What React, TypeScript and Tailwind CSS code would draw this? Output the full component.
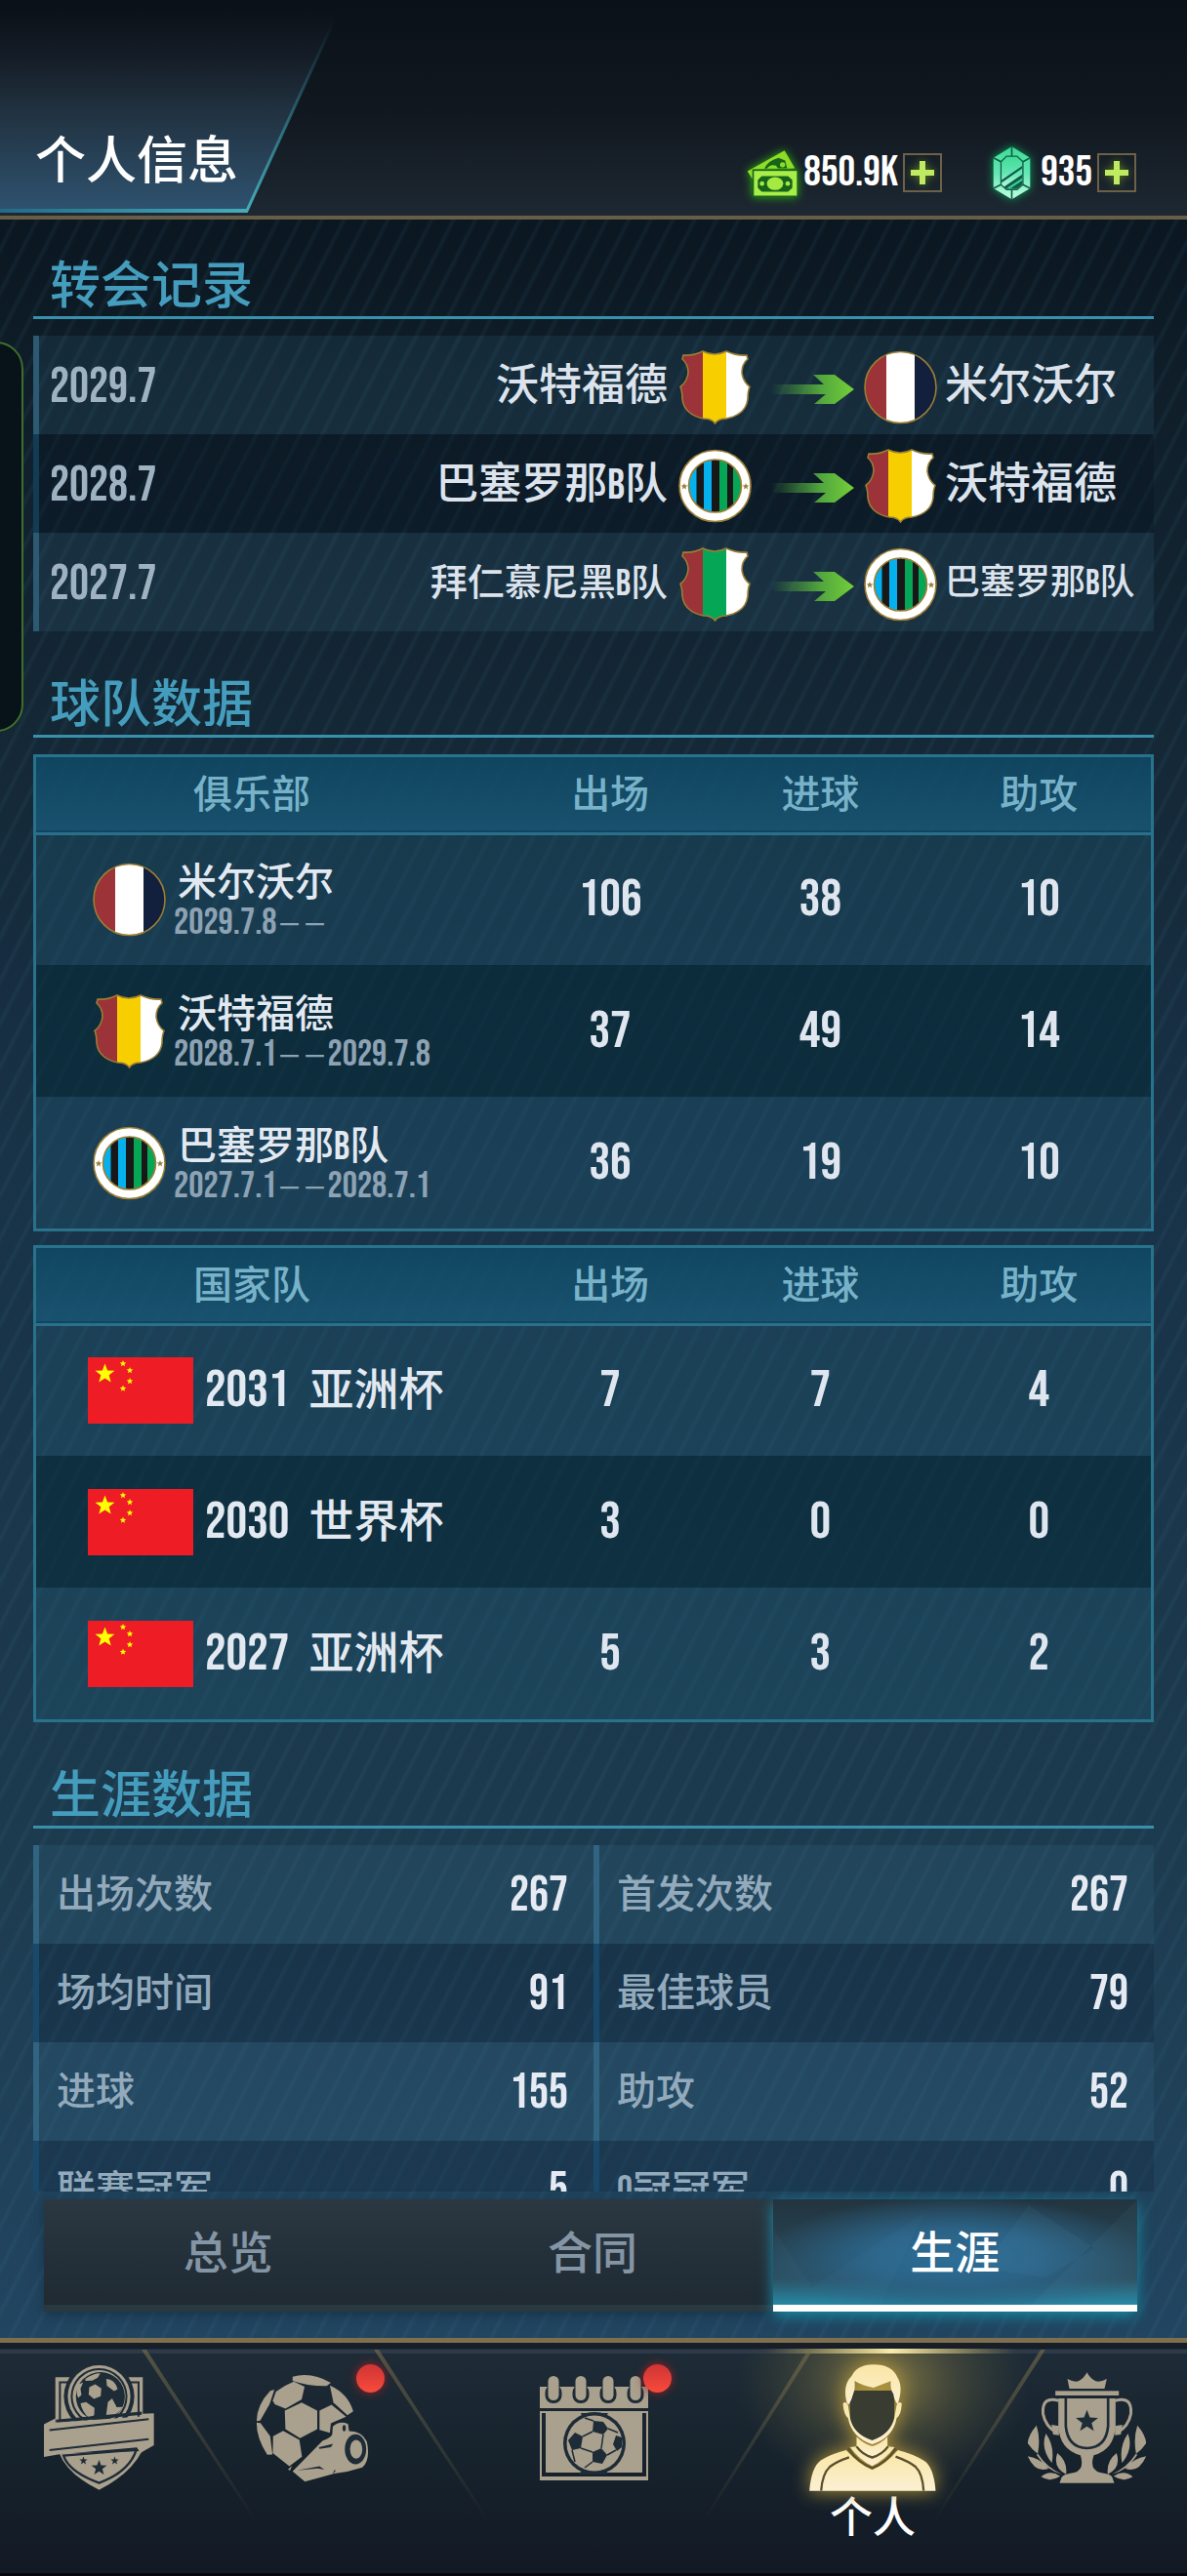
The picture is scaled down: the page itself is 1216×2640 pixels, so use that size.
import React, { useState } from 'react';
import clsx from 'clsx';

type CrestKind = 'yellow' | 'green' | 'tricolour' | 'stripes';

interface Transfer {
  date: string;
  from: string;
  fromCrest: CrestKind;
  to: string;
  toCrest: CrestKind;
}

const transfers: Transfer[] = [
  { date: '2029.7', from: '沃特福德', fromCrest: 'yellow', to: '米尔沃尔', toCrest: 'tricolour' },
  { date: '2028.7', from: '巴塞罗那B队', fromCrest: 'stripes', to: '沃特福德', toCrest: 'yellow' },
  { date: '2027.7', from: '拜仁慕尼黑B队', fromCrest: 'green', to: '巴塞罗那B队', toCrest: 'stripes' }
];

const clubs: { name: string; crest: CrestKind; start: string; end: string; stats: number[] }[] = [
  { name: '米尔沃尔', crest: 'tricolour', start: '2029.7.8', end: '', stats: [106, 38, 10] },
  { name: '沃特福德', crest: 'yellow', start: '2028.7.1', end: '2029.7.8', stats: [37, 49, 14] },
  { name: '巴塞罗那B队', crest: 'stripes', start: '2027.7.1', end: '2028.7.1', stats: [36, 19, 10] }
];

const cups = [
  { year: '2031', name: '亚洲杯', stats: [7, 7, 4] },
  { year: '2030', name: '世界杯', stats: [3, 0, 0] },
  { year: '2027', name: '亚洲杯', stats: [5, 3, 2] }
];

const career = [
  ['出场次数', 267],
  ['首发次数', 267],
  ['场均时间', 91],
  ['最佳球员', 79],
  ['进球', 155],
  ['助攻', 52],
  ['联赛冠军', 5],
  ['O冠冠军', 0]
];

const starPoints = (cx: number, cy: number, r: number) =>
  Array.from({ length: 10 }, (_, i) => {
    const a = (Math.PI / 5) * i - Math.PI / 2;
    const d = i % 2 ? r * 0.42 : r;
    return `${cx + d * Math.cos(a)},${cy + d * Math.sin(a)}`;
  }).join(' ');

const shieldPath =
  'M5 5 Q15 6 25 1 Q37 7 49 1 Q60 6 70 5 L71 9 Q65 14 65 23 Q66 32 73 37.5 Q71 42 71 50 Q69 66 49 70 Q41 70 37.5 75 Q34 70 26 70 Q6 66 4 50 Q4 42 2 37.5 Q9 32 10 23 Q10 14 4 9 Z';

const Crest: React.FC<{ kind: CrestKind }> = ({ kind }) => {
  const id = React.useId();

  if (kind === 'stripes') {
    return (
      <svg viewBox="0 0 75 76" className="h-[76px] w-[75px] shrink-0">
        <clipPath id={id}><circle cx="37.5" cy="38" r="27" /></clipPath>
        <circle cx="37.5" cy="38" r="36.5" fill="#fff" stroke="#9b7e35" strokeWidth="1.6" />
        <g clipPath={`url(#${id})`}>
          <rect x="10" y="10" width="9" height="56" fill="#05b0ee" />
          <rect x="18.5" y="10" width="8" height="56" fill="#181818" />
          <rect x="26" y="10" width="8" height="56" fill="#05b0ee" />
          <rect x="34" y="10" width="8" height="56" fill="#181818" />
          <rect x="42" y="10" width="8" height="56" fill="#06a657" />
          <rect x="50" y="10" width="7" height="56" fill="#181818" />
          <rect x="56" y="10" width="10" height="56" fill="#06a657" />
        </g>
        <circle cx="37.5" cy="38" r="27" fill="none" stroke="#9b7e35" strokeWidth="1.6" />
        <polygon points={starPoints(6, 38.5, 3.6)} fill="#9b7e35" />
        <polygon points={starPoints(69, 38.5, 3.6)} fill="#9b7e35" />
      </svg>
    );
  }

  const round = kind === 'tricolour';
  const middle = kind === 'yellow' ? '#f7cf00' : kind === 'green' ? '#06a657' : '#fff';
  return (
    <svg viewBox="0 0 75 76" className="h-[76px] w-[75px] shrink-0">
      <clipPath id={id}>
        {round ? <circle cx="37.5" cy="38" r="36.5" /> : <path d={shieldPath} />}
      </clipPath>
      <g clipPath={`url(#${id})`}>
        <rect width="26" height="76" fill="#9b3338" />
        <rect x={round ? 23 : 25} width={round ? 29 : 24} height="76" fill={middle} />
        <rect x={round ? 52 : 49} width="26" height="76" fill={round ? '#121f3d' : '#fff'} />
      </g>
      {round ? (
        <circle cx="37.5" cy="38" r="36.5" fill="none" stroke="#9b7e35" strokeWidth="1.6" />
      ) : (
        <path d={shieldPath} fill="none" stroke="#9b7e35" strokeWidth="1.6" />
      )}
    </svg>
  );
};

const Arrow = () => (
  <svg viewBox="0 0 88 32" className="mt-1 h-8 w-[88px] shrink-0">
    <defs>
      <linearGradient id="arrow-tail">
        <stop offset="0" stopColor="#4fa63c" stopOpacity="0" />
        <stop offset="0.6" stopColor="#52a63e" />
        <stop offset="1" stopColor="#74cf38" />
      </linearGradient>
    </defs>
    <path d="M2 11 H56 L45 1 H67 L87 16 L67 31 H46 L58 21 H2 Z" fill="url(#arrow-tail)" />
  </svg>
);

const Flag = () => (
  <svg viewBox="0 0 108 68" className="h-[68px] w-[108px] shrink-0">
    <rect width="108" height="68" fill="#ee1c25" />
    <g fill="#ffff00">
      <polygon points={starPoints(17.5, 17, 10.5)} />
      <polygon points={starPoints(36, 6.5, 3.5)} />
      <polygon points={starPoints(43, 13.5, 3.5)} />
      <polygon points={starPoints(43, 24.5, 3.5)} />
      <polygon points={starPoints(36, 32, 3.5)} />
    </g>
  </svg>
);

const MoneyIcon = () => (
  <svg viewBox="84 54 156 146" className="h-[49px] w-[52px] drop-shadow-[0_0_5px_#2fae10]">
    <path d="M86 121 L200 57 L232 112 L104 116 L102 146 Z" fill="#8fdc28" />
    <path d="M138 113 Q150 88 182 80 L202 88 L208 112 Z" fill="#17631a" />
    <path d="M146 113 Q156 98 174 104 L180 113 Z" fill="#8fdc28" />
    <circle cx="194" cy="101" r="8" fill="#8fdc28" />
    <rect x="101" y="115" width="140" height="85" fill="#17631a" />
    <rect x="106" y="120" width="132" height="76" fill="#a9ee48" />
    <path d="M130 136 H211 L224 148 V172 L211 184 H130 L118 172 V148 Z" fill="#17631a" />
    <ellipse cx="171" cy="159" rx="25" ry="20" fill="#a4ea42" />
    <circle cx="131" cy="159" r="7" fill="#a4ea42" />
    <circle cx="210" cy="159" r="7" fill="#a4ea42" />
  </svg>
);

const GemIcon = () => (
  <svg viewBox="838 60 116 164" className="h-[55px] w-[39px] drop-shadow-[0_0_5px_#0c9a58]">
    <defs>
      <linearGradient id="gem" x1="0" y1="0" x2="0" y2="1">
        <stop offset="0" stopColor="#3fdc94" />
        <stop offset="0.5" stopColor="#63e6b4" />
        <stop offset="1" stopColor="#c3ffe2" />
      </linearGradient>
    </defs>
    <path d="M896 61 L952 95 V188 L896 222 L840 188 V95 Z" fill="url(#gem)" />
    <path d="M863 107 L880 90 H912 L930 107 V177 L912 192 H880 L863 177 Z" fill="url(#gem)" stroke="#0f5f48" strokeWidth="4" />
    <path d="M865 163 L928 120 V127 L865 171 Z M872 184 L928 146 V176 L911 190 H881 Z" fill="#0d5a48" />
    <path d="M882 187 L928 157 V164 L890 190 Z" fill="#3ccf92" />
    <path d="M896 61 V90 M840 95 L863 107 M952 95 L930 107 M840 188 L863 177 M952 188 L930 177 M896 222 V192" stroke="#0f5f48" strokeWidth="5" />
  </svg>
);

const PlusButton: React.FC<{ label: string }> = ({ label }) => (
  <button aria-label={label} className="ml-[5px] flex h-10 w-10 items-center justify-center border-2 border-[#6d6147]">
    <svg viewBox="0 0 24 24" className="h-6 w-6 drop-shadow-[0_0_4px_#5d7d1c]">
      <path d="M9 0 H15 V9 H24 V15 H15 V24 H9 V15 H0 V9 H9 Z" fill="#c0ea62" />
    </svg>
  </button>
);

const Cut = '#1e2c37';

const BadgeIcon = () => (
  <svg viewBox="135 105 338 383" className="h-[128px] w-[113px]" fill="#a9a08e">
    <path d="M170 142 H438 V290 H170 Z" />
    <path d="M184 286 V157 H425 V286" fill="none" stroke={Cut} strokeWidth="6" />
    <circle cx="304" cy="201" r="108" fill={Cut} />
    <circle cx="304" cy="201" r="96" />
    <circle cx="304" cy="201" r="87" fill={Cut} />
    <circle cx="304" cy="201" r="81" />
    <circle cx="308" cy="201" r="75" fill={Cut} />
    <path d="M274 172 L292 163 L311 176 L309 200 L288 208 L272 195 Z M262 147 Q285 130 308 130 L300 143 L283 152 L262 153 Z M326 147 Q352 148 361 178 L350 184 L328 168 Z M240 163 L255 158 L247 177 L250 196 L240 205 Q230 185 240 163 Z M331 218 L344 207 L358 234 L377 233 Q360 262 325 264 Z M247 222 L264 218 L290 236 L289 258 L272 266 Q252 248 247 222 Z" />
    <path d="M172 277 L435 252" stroke={Cut} strokeWidth="10" />
    <path d="M182 375 Q208 440 304 487 Q398 440 436 368 Z" />
    <path d="M195 382 L418 364 Q398 430 304 466 Q212 432 195 382 Z" fill="none" stroke={Cut} strokeWidth="7" />
    <path d="M135 286 L170 268 V281 L435 262 V254 L472 252 V350 L430 374 L420 357 L182 378 L135 386 Z" />
    <path d="M152 304 L456 270 M152 365 L456 332" stroke={Cut} strokeWidth="6" />
    <g fill={Cut}>
      <polygon points={starPoints(304, 420, 25)} />
      <polygon points={starPoints(256, 398, 13)} />
      <polygon points={starPoints(352, 398, 13)} />
    </g>
  </svg>
);

const WhistleIcon = () => (
  <svg viewBox="794 130 348 334" className="h-[111px] w-[116px]" fill="#a9a08e">
    <path d="M907 138 Q965 122 1025 157 L1012 167 Q955 168 907 151 Z" />
    <path d="M911 153 L944 169 L935 208 L885 237 L852 223 L846 212 L856 184 Q880 165 911 153 Z" />
    <path d="M851 178 L838 182 Q797 225 796 275 L807 274 L836 223 Z" />
    <path d="M935 218 L983 243 V300 L930 328 L885 300 L883 243 Z" />
    <path d="M1022 165 Q1078 190 1094 245 L1076 257 L1033 218 Z" />
    <path d="M990 243 L1027 225 L1072 262 L1025 282 L1022 311 L990 302 Z" />
    <path d="M796 280 L808 281 L838 322 L845 378 L829 379 Q796 330 796 280 Z" />
    <path d="M847 322 L878 305 L928 333 L936 385 L897 414 L846 374 Z" />
    <path d="M907 430 L1000 335 Q1022 328 1029 317 L1031 292 Q1052 272 1078 284 L1081 306 Q1120 305 1136 338 Q1148 395 1122 418 Q1080 432 1036 437 L945 462 Z" />
    <path d="M893 424 L905 413 L899 428 Z" />
    <g fill={Cut}>
      <ellipse cx="1101" cy="362" rx="33" ry="46" />
      <ellipse cx="1066" cy="297" rx="5" ry="10" />
      <path d="M988 356 L1032 345 L1025 356 L990 361 Z M921 427 L990 414 L1005 425 L985 421 Z M1030 440 L1036 426 L1040 428 Z" />
    </g>
    <ellipse cx="1103" cy="362" rx="19" ry="29" />
  </svg>
);

const CalendarIcon = () => (
  <svg viewBox="0 0 111 107" className="h-[107px] w-[111px]" fill="#a9a08e">
    <path d="M0 11 H111 V33 H0 Z" />
    <path d="M1 37 H110 V106 H1 Z" fill="none" stroke="#a9a08e" strokeWidth="2" />
    <rect x="1" y="103" width="109" height="4" />
    <rect x="6" y="38" width="99" height="61" />
    {[14, 42, 70, 98].map((x) => (
      <g key={x}>
        <rect x={x - 8.5} y="9" width="17" height="19" rx="8" fill={Cut} />
        <rect x={x - 5.5} y="0" width="11" height="25" rx="5.5" />
      </g>
    ))}
    <path d="M42 38 H70 L64 48 H46 Z M40 101 L46 92 H66 L70 101 Z" fill={Cut} />
    <circle cx="56" cy="69" r="32" fill={Cut} />
    <circle cx="56" cy="69" r="28.5" />
    <g fill={Cut}>
      <path d="M55 46 L65 47 L70 54 L65 60 L54 57 Z" />
      <path d="M36 58 L44 62 L42 74 L33 76 L29 66 Z" />
      <path d="M54 78 L63 74 L69 81 L64 90 L54 88 Z" />
      <path d="M78 61 L84 63 L84 73 L79 77 L75 70 Z" />
    </g>
    <path d="M54 57 L44 62 M55 46 L46 43 M70 54 L80 58 M65 60 L63 74 M42 74 L54 78 M69 81 L78 76 M54 88 L46 94 M33 76 L36 88" stroke={Cut} strokeWidth="1.5" fill="none" />
  </svg>
);

const PersonIcon = () => (
  <svg viewBox="92 69 389 390" className="h-[130px] w-[130px] drop-shadow-[0_0_10px_#b89a3c]">
    <defs>
      <linearGradient id="person" x1="0" y1="0" x2="0" y2="1">
        <stop offset="0" stopColor="#fae6a4" />
        <stop offset="1" stopColor="#fbf0d3" />
      </linearGradient>
    </defs>
    <path d="M216 150 H354 L352 250 Q335 290 285 306 Q232 290 218 250 Z" fill="#393c31" />
    <g fill="url(#person)">
      <path d="M208 190 Q192 135 222 105 Q240 69 290 70 Q345 70 362 108 Q382 140 363 192 Q352 180 350 160 Q340 148 342 121 Q318 130 289 141 Q255 135 231 120 Q233 145 228 156 Q222 178 214 192 Z" />
      <path d="M195 190 Q204 180 211 195 L217 235 Q228 285 285 303 Q340 285 353 235 L360 195 Q366 180 376 190 Q374 225 360 235 Q350 295 285 315 Q222 295 211 235 Q198 225 195 190 Z" />
      <path d="M237 292 Q260 315 285 321 Q310 315 332 292 V320 L312 342 Q285 362 258 342 L237 320 Z" />
      <path d="M217 324 L236 322 Q255 350 285 360 Q315 350 335 322 L354 324 Q325 362 285 382 Q245 362 217 324 Z" />
      <path d="M92 458 Q98 385 128 364 Q158 345 205 333 Q245 378 285 394 Q325 378 364 333 Q412 345 445 366 Q474 385 480 458 Z" />
    </g>
    <path d="M128 458 Q132 405 155 384 Q175 368 214 355 M443 458 Q440 405 418 384 Q398 368 357 353 M237 322 Q255 347 285 355 Q315 347 334 322 M211 328 Q240 370 285 388 Q330 370 358 328" fill="none" stroke="#5a4f2c" strokeWidth="7" />
  </svg>
);

const laurel =
  'M789 260 Q763 290 762 315 Q775 335 793 347 Q802 300 789 260 Z M818 285 Q800 330 836 376 Q846 325 818 285 Z M853 345 Q838 390 880 410 Q885 370 853 345 Z M762 355 Q800 360 826 393 Q785 408 762 355 Z M803 418 Q830 395 862 416 Q830 436 803 418 Z M792 345 Q820 390 868 410 Q820 400 790 352 Z';
const handle = 'M858 184 Q805 168 809 224 Q816 262 850 282';

const TrophyIcon = () => (
  <svg viewBox="760 96 368 342" className="h-[114px] w-[123px]" fill="#a9a08e">
    <path d="M890 147 L884 117 Q905 128 918 124 Q935 115 944 97 Q953 115 971 124 Q985 128 1005 117 L998 147 Z" />
    <rect x="847" y="154" width="195" height="14" />
    <path d="M856 177 H1032 V262 Q1028 335 965 352 Q950 395 985 405 Q1020 410 1022 420 L1028 437 H860 L866 420 Q870 410 905 405 Q938 395 924 352 Q860 335 856 262 Z" />
    <path d="M879 177 V262 Q885 328 944 330 Q1003 328 1009 262 V177" fill="none" stroke={Cut} strokeWidth="8" />
    <path d="M835 258 L858 262 V290 L840 288 Z M1053 258 L1030 262 V290 L1048 288 Z" />
    <path d={handle} fill="none" stroke="#a9a08e" strokeWidth="9" />
    <path d={laurel} />
    <g transform="translate(1888 0) scale(-1 1)">
      <path d={handle} fill="none" stroke="#a9a08e" strokeWidth="9" />
      <path d={laurel} />
    </g>
    <polygon points={starPoints(944, 248, 36)} fill={Cut} />
  </svg>
);

const SectionTitle: React.FC<{ children: React.ReactNode }> = ({ children }) => (
  <h2 className="mb-[17px] border-b-[3px] border-[#3990ac] pt-3 pl-[17px] text-[52px] leading-[56px] text-[#459dbd]">
    {children}
  </h2>
);

const StatsTable: React.FC<{ title: string; rows: { key: string; label: React.ReactNode; stats: number[] }[] }> = ({ title, rows }) => (
  <div className="border-[3px] border-[#28728c]">
    <table className="w-full table-fixed border-collapse">
      <thead>
        <tr className="h-[78px] border-b-[3px] border-[#2a6f8b] bg-linear-to-b from-[#0f4864]/90 to-[#195573]/90 text-[40px] leading-[56px] text-[#78b2c9]">
          <th scope="col" className="w-[42.2%] pt-1 pr-10 font-medium">{title}</th>
          <th scope="col" className="w-[18.6%] pt-1 font-medium">出场</th>
          <th scope="col" className="w-[19.1%] pt-1 font-medium">进球</th>
          <th scope="col" className="pt-1 font-medium">助攻</th>
        </tr>
      </thead>
      <tbody>
        {rows.map((row) => (
          <tr key={row.key} className="h-[135px] odd:bg-[#1f5a73]/35 even:bg-[#062b39]/60">
            <td>{row.label}</td>
            {row.stats.map((value, i) => (
              <td key={i} className="text-center text-[54px] leading-[60px] text-[#dfe6ef]">
                {value}
              </td>
            ))}
          </tr>
        ))}
      </tbody>
    </table>
  </div>
);

export default function App() {
  const [tab, setTab] = useState('生涯');

  const clubRows = clubs.map((club) => ({
    key: club.name,
    stats: club.stats,
    label: (
      <div className="flex items-center gap-2 pl-[58px]">
        <Crest kind={club.crest} />
        <div className="pt-2 whitespace-nowrap">
          <div className="pl-1 text-[40px] leading-[44px] text-[#e3e9f1]">{club.name}</div>
          <div className="text-[38px] leading-9 text-[#8da2b3]">
            {club.start}
            <span className="text-[26px]">－－</span>
            {club.end}
          </div>
        </div>
      </div>
    )
  }));

  const cupRows = cups.map((cup) => ({
    key: cup.year,
    stats: cup.stats,
    label: (
      <div className="flex items-center gap-3 pl-[53px] whitespace-nowrap text-[#e3e9f1]">
        <Flag />
        <span className="flex items-center gap-5">
          <span className="text-[54px] leading-[60px]">{cup.year}</span>
          <span className="pt-1 text-[46px] leading-[60px]">{cup.name}</span>
        </span>
      </div>
    )
  }));

  return (
    <div className="relative flex h-screen min-h-[1200px] flex-col overflow-hidden bg-[repeating-linear-gradient(117deg,transparent_0px,transparent_13px,rgba(80,150,180,0.09)_16px,transparent_20px),linear-gradient(180deg,#0a1620_8%,#0f1e29_15%,#142735_28%,#183247_45%,#1c3a4d_70%,#224560_91%)] font-[Bebas_Neue,Oswald,Roboto_Condensed,Noto_Sans_CJK_SC,sans-serif] font-medium">
      <header className="relative flex shrink-0 items-end justify-between border-b-4 border-[#685d47] bg-linear-to-b from-[#0b1119] via-[#11171f] to-[#1d2832] pt-[134px] pr-[52px] pb-[17px] pl-9">
        <svg viewBox="0 0 352 218" className="absolute top-0 left-0 h-[218px] w-[352px]" aria-hidden="true">
          <defs>
            <linearGradient id="tab-fill" x1="0" y1="0" x2="0" y2="1">
              <stop offset="0.05" stopColor="#16202b" stopOpacity="0" />
              <stop offset="0.5" stopColor="#20303e" />
              <stop offset="1" stopColor="#2f5370" />
            </linearGradient>
            <linearGradient id="tab-edge" x1="0" y1="0" x2="0" y2="1">
              <stop offset="0.1" stopColor="#2f8c9c" stopOpacity="0" />
              <stop offset="1" stopColor="#45adba" />
            </linearGradient>
            <linearGradient id="tab-base">
              <stop offset="0" stopColor="#226a88" />
              <stop offset="1" stopColor="#45adba" />
            </linearGradient>
          </defs>
          <path d="M0 0 H352 L252 218 H0 Z" fill="url(#tab-fill)" />
          <path d="M352 0 L252 218" stroke="url(#tab-edge)" strokeWidth="3" />
          <path d="M0 214 H254 L252 218 H0 Z" fill="url(#tab-base)" />
        </svg>
        <h1 className="relative mb-[2px] text-[52px] leading-[68px] text-white">个人信息</h1>
        <div className="flex h-[54px] items-center text-[44px] leading-[54px] text-white">
          <MoneyIcon />
          <span className="ml-[6px]">850.9K</span>
          <PlusButton label="增加资金" />
          <span className="w-[52px]" />
          <GemIcon />
          <span className="ml-[10px]">935</span>
          <PlusButton label="增加宝石" />
        </div>
      </header>

      <div className="absolute top-[350px] -left-8 h-[400px] w-14 rounded-[28px] border-2 border-[#3f6f2c] bg-[#081219]" />

      <main className="min-h-0 flex-1 overflow-y-auto px-[34px] pt-[31px] [scrollbar-width:none]">
        <section>
          <SectionTitle>转会记录</SectionTitle>
          <ul>
            {transfers.map((t) => (
              <li key={t.date} className="flex h-[101px] items-center border-l-[6px] pt-1 odd:border-[#2b5a72] odd:bg-[#4682a0]/15 even:border-[#123c53] even:bg-[#000a19]/25">
                <span className="pl-[11px] text-[50px] leading-[60px] text-[#9fb2c2]">{t.date}</span>
                <span className={clsx('mr-[11px] flex-1 text-right text-[#dce3ec]', t.from.length > 6 ? 'text-[38px]' : 'text-[44px]')}>{t.from}</span>
                <Crest kind={t.fromCrest} />
                <span className="mr-[9px] ml-[18px]"><Arrow /></span>
                <Crest kind={t.toCrest} />
                <span className={clsx('ml-2 w-[214px] whitespace-nowrap text-[#dce3ec]', t.to.length > 5 ? 'text-[36px]' : 'text-[44px]')}>{t.to}</span>
              </li>
            ))}
          </ul>
        </section>

        <section className="mt-[38px] flex flex-col">
          <SectionTitle>球队数据</SectionTitle>
          <StatsTable title="俱乐部" rows={clubRows} />
          <div className="h-[14px]" />
          <StatsTable title="国家队" rows={cupRows} />
        </section>

        <section className="mt-[38px]">
          <SectionTitle>生涯数据</SectionTitle>
          <dl className="grid grid-cols-2">
            {career.map(([label, value], i) => (
              <div
                key={label}
                className={clsx(
                  'flex h-[101px] items-center justify-between border-l-[6px] pt-[2px] pr-[26px] pl-[18px]',
                  i % 4 < 2 ? 'border-[#316480] bg-[#4682a0]/15' : 'border-[#19496a] bg-[#000a1e]/15'
                )}
              >
                <dt className="text-[40px] leading-[60px] text-[#93aabc]">{label}</dt>
                <dd className="text-[50px] leading-[60px] text-[#e6ebf3]">{value}</dd>
              </div>
            ))}
          </dl>
        </section>
      </main>

      <div role="tablist" className="mt-2 mr-[51px] mb-[27px] ml-[45px] grid shrink-0 grid-cols-3 shadow-[0_4px_10px_#0d253580]">
        {['总览', '合同', '生涯'].map((name) => (
          <button
            key={name}
            role="tab"
            aria-selected={tab === name}
            onClick={() => setTab(name)}
            className={clsx(
              'relative h-[115px] border-b-[7px] pt-2 text-[46px] leading-[68px]',
              tab === name
                ? 'border-white bg-[radial-gradient(ellipse_at_50%_55%,#2d6e98_0%,#2b6285_35%,transparent_75%),linear-gradient(180deg,#22343f_0%,#2a4c5d_75%,#2587a3_100%)] text-white shadow-[0_4px_14px_#1c93b0]'
                : 'border-[#2a383f] bg-linear-to-b from-[#2b3841] to-[#1f2a33] pl-1 text-[#8495a5]'
            )}
          >
            {tab === name && (
              <svg viewBox="0 0 374 108" preserveAspectRatio="none" className="absolute inset-0 h-full w-full" aria-hidden="true">
                <path d="M0 30 L40 90 L155 14 L110 108 H0 Z" fill="#5b9db8" opacity="0.06" />
                <path d="M374 0 L265 108 H374 Z M262 6 L330 50 L280 80 L215 70 Z" fill="#7fc0d8" opacity="0.06" />
              </svg>
            )}
            <span className="relative">{name}</span>
          </button>
        ))}
      </div>

      <nav className="relative grid h-[244px] shrink-0 grid-cols-[202fr_236fr_340fr_232fr_206fr] border-t-[5px] border-[#7d6f4f] bg-linear-to-b from-[#1f2d38] via-[#16222c] to-[#131924]">
        <svg viewBox="0 0 1216 239" preserveAspectRatio="none" className="absolute inset-0 h-full w-full" aria-hidden="true">
          <defs>
            <linearGradient id="nav-line" x1="0" y1="0" x2="0" y2="1">
              <stop offset="0" stopColor="#7a6f4c" stopOpacity="0.6" />
              <stop offset="1" stopColor="#7a6f4c" stopOpacity="0" />
            </linearGradient>
            <linearGradient id="nav-shine">
              <stop offset="0" stopColor="#c9b15c" stopOpacity="0" />
              <stop offset="0.5" stopColor="#fbeeb0" />
              <stop offset="1" stopColor="#c9b15c" stopOpacity="0" />
            </linearGradient>
            <radialGradient id="nav-glow">
              <stop offset="0" stopColor="#a9974c" stopOpacity="0.75" />
              <stop offset="0.5" stopColor="#7d7343" stopOpacity="0.35" />
              <stop offset="1" stopColor="#5d5a3c" stopOpacity="0" />
            </radialGradient>
          </defs>
          <rect y="7" width="1216" height="4" fill="#2c3a49" />
          <ellipse cx="905" cy="40" rx="150" ry="115" fill="url(#nav-glow)" />
          <rect width="1216" height="6" fill="#171e28" />
          <rect x="785" y="6" width="255" height="5" fill="url(#nav-shine)" />
          <path d="M145 7 h5 L264 183 h-3 Z M383 7 h5 L502 183 h-3 Z M828 7 h5 L722 183 h-3 Z M1066 7 h5 L958 183 h-3 Z" fill="url(#nav-line)" />
          <rect y="236" width="1216" height="3" fill="#05070c" />
        </svg>
        {[
          { name: '球队', icon: <BadgeIcon /> },
          { name: '比赛', icon: <WhistleIcon />, alert: '-right-4' },
          { name: '日程', icon: <CalendarIcon />, alert: '-right-6' },
          { name: '个人', icon: <PersonIcon />, active: true },
          { name: '荣誉', icon: <TrophyIcon /> }
        ].map((item) => (
          <button key={item.name} aria-label={item.name} className="relative flex flex-col items-center pt-[22px]">
            <span className="relative flex h-[130px] items-center">
              {item.icon}
              {item.alert && (
                <span className={clsx('absolute top-0 h-[29px] w-[29px] rounded-full bg-linear-to-b from-[#cf3434] to-[#f94a3c] shadow-[0_0_10px_#a02024]', item.alert)} />
              )}
            </span>
            {item.active && <span className="mt-1 text-[44px] leading-[52px] text-white">{item.name}</span>}
          </button>
        ))}
      </nav>
    </div>
  );
}
